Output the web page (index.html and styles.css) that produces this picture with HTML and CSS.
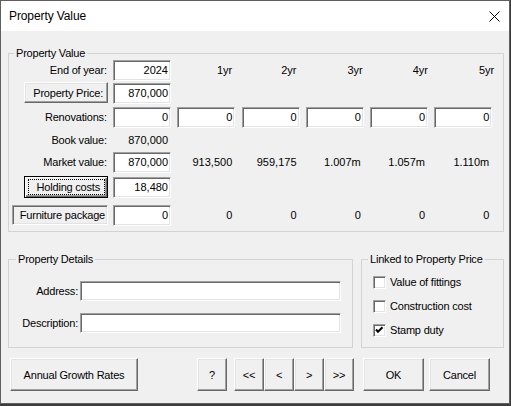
FILE: index.html
```html
<!DOCTYPE html>
<html>
<head>
<meta charset="utf-8">
<title>Property Value</title>
<link rel="stylesheet" href="styles.css">
</head>
<body>
<div class="window">
  <div class="titlebar">
    <span class="title">Property Value</span>
    <svg class="close" width="11" height="11" viewBox="0 0 11 11"><path d="M0.5 0.5 L10.5 10.5 M10.5 0.5 L0.5 10.5" stroke="#000" stroke-width="1" fill="none"/></svg>
  </div>
  <div class="content">
    <fieldset class="group g-value">
      <legend>Property Value</legend>
      <div class="row r-year">
        <span class="lbl">End of year:</span>
        <div class="tb">2024</div>
        <span class="val yr1">1yr</span>
        <span class="val yr2">2yr</span>
        <span class="val yr3">3yr</span>
        <span class="val yr4">4yr</span>
        <span class="val yr5">5yr</span>
      </div>
      <div class="row r-price">
        <button class="btn btn-price">Property Price:</button>
        <div class="tb">870,000</div>
      </div>
      <div class="row r-renov">
        <span class="lbl">Renovations:</span>
        <div class="tb">0</div>
        <div class="tb">0</div>
        <div class="tb">0</div>
        <div class="tb">0</div>
        <div class="tb">0</div>
        <div class="tb">0</div>
      </div>
      <div class="row r-book">
        <span class="lbl">Book value:</span>
        <span class="val">870,000</span>
      </div>
      <div class="row r-market">
        <span class="lbl">Market value:</span>
        <div class="tb">870,000</div>
        <span class="val">913,500</span>
        <span class="val">959,175</span>
        <span class="val">1.007m</span>
        <span class="val">1.057m</span>
        <span class="val">1.110m</span>
      </div>
      <div class="row r-hold">
        <button class="btn btn-hold"><span class="focus">Holding costs</span></button>
        <div class="tb">18,480</div>
      </div>
      <div class="row r-furn">
        <div class="flat">Furniture package</div>
        <div class="tb">0</div>
        <span class="val">0</span>
        <span class="val">0</span>
        <span class="val">0</span>
        <span class="val">0</span>
        <span class="val">0</span>
      </div>
    </fieldset>

    <div class="lower">
      <fieldset class="group g-details">
        <legend>Property Details</legend>
        <div class="form">
          <span class="lbl">Address:</span>
          <div class="tb"></div>
          <span class="lbl">Description:</span>
          <div class="tb"></div>
        </div>
      </fieldset>
      <fieldset class="group g-linked">
        <legend>Linked to Property Price</legend>
        <div class="checks">
          <div class="check"><span class="cb"></span><span class="ctext">Value of fittings</span></div>
          <div class="check"><span class="cb"></span><span class="ctext">Construction cost</span></div>
          <div class="check"><span class="cb"><svg width="11" height="11" viewBox="0 0 11 11"><path d="M2 4.5 L4 6.8 L8.5 2.2" stroke="#000" stroke-width="2" fill="none"/></svg></span><span class="ctext">Stamp duty</span></div>
        </div>
      </fieldset>
    </div>

    <div class="buttons">
      <button class="btn b-annual">Annual Growth Rates</button>
      <button class="btn b-help">?</button>
      <button class="btn b-nav b-first">&lt;&lt;</button>
      <button class="btn b-nav">&lt;</button>
      <button class="btn b-nav">&gt;</button>
      <button class="btn b-nav">&gt;&gt;</button>
      <button class="btn b-ok">OK</button>
      <button class="btn b-cancel">Cancel</button>
    </div>
  </div>
</div>
</body>
</html>
```

FILE: styles.css
```css
* { box-sizing: border-box; }
html, body { margin: 0; padding: 0; }
body {
  width: 511px;
  height: 406px;
  overflow: hidden;
  background: #3c3c3c;
  font: 11px/14px "Liberation Sans", Arial, sans-serif;
  color: #000;
}
.window {
  width: 510px;
  height: 404px;
  border: 1px solid #5f5f5f;
  background: #f0f0f0;
  display: flex;
  flex-direction: column;
}
.titlebar {
  height: 30px;
  flex: none;
  background: #fff;
  display: flex;
  align-items: center;
  padding: 0 9px 0 8px;
}
.title {
  flex: 1;
  font-size: 12px;
  letter-spacing: -0.1px;
}
.close { display: block; margin-top: 1px; }
.content {
  padding: 15px 5px 0 7px;
}
fieldset.group {
  margin: 0;
  padding: 0;
  border: 1px solid #d3d3d3;
  min-width: 0;
}
legend {
  padding: 0 2px;
  line-height: 14px;
  letter-spacing: -0.2px;
}
.g-value legend { margin-left: 5px; }
.g-details legend { margin-left: 7px; }
.g-linked legend { margin-left: 6px; }

.g-value { padding-bottom: 5px !important; }
.row {
  display: grid;
  grid-template-columns: 97.75px repeat(6, 58px);
  column-gap: 6.25px;
  align-items: start;
}
.r-year { height: 23px; }
.r-price { height: 24px; }
.r-renov { height: 23px; }
.r-book { height: 22px; }
.r-market { height: 25px; }
.r-hold { height: 28px; }
.r-furn { height: 21px; }

.lbl {
  justify-self: end;
  line-height: 21px;
  letter-spacing: -0.2px;
  white-space: nowrap;
}
.val {
  justify-self: end;
  line-height: 21px;
  padding-right: 3px;
  white-space: nowrap;
}
.yr1 { margin-right: 0; }
.yr2 { margin-right: 0; }
.yr3 { margin-right: -2px; }
.yr4 { margin-right: -3px; }
.yr5 { margin-right: -5px; }
.tb {
  height: 21px;
  background: #fff;
  border: 1px solid;
  border-color: #a0a0a0 #fff #fff #a0a0a0;
  box-shadow: inset 1px 1px #696969, inset -1px -1px #e3e3e3;
  text-align: right;
  padding-right: 2px;
  line-height: 19px;
  white-space: nowrap;
}
.btn {
  font: inherit;
  color: #000;
  background: #f0f0f0;
  border: 1px solid;
  border-color: #fff #696969 #696969 #fff;
  box-shadow: inset -1px -1px #a0a0a0, inset 1px 1px #e3e3e3;
  padding: 0;
  margin: 0;
  letter-spacing: -0.2px;
  white-space: nowrap;
}
.btn-price {
  justify-self: end;
  margin: -1px -1.25px 0 0;
  width: 84px;
  height: 21px;
  text-align: right;
  padding-right: 4px;
}
.btn-hold {
  justify-self: end;
  margin: -1px -1.25px 0 0;
  width: 84px;
  height: 22px;
  border: 1px solid #000;
  box-shadow: inset 1px 1px #fff, inset -1px -1px #696969, inset -2px -2px #a0a0a0;
  padding: 2px 2px 2px 3px;
  display: flex;
}
.focus {
  flex: 1;
  border: 1px dotted #000;
  text-align: right;
  padding-right: 4px;
  line-height: 14px;
}
.flat {
  justify-self: end;
  margin-right: -1.25px;
  width: 96px;
  height: 20px;
  border: 1px solid;
  border-color: #a0a0a0 #fff #fff #a0a0a0;
  box-shadow: inset 1px 1px #696969, inset -1px -1px #e3e3e3;
  text-align: right;
  padding-right: 2px;
  line-height: 18px;
  letter-spacing: -0.2px;
  white-space: nowrap;
}

.lower {
  display: flex;
  margin-top: 20px;
}
.g-details { width: 345px; flex: none; }
.g-linked { flex: 1; margin-left: 8px !important; }
.form {
  display: grid;
  grid-template-columns: 69px 261px;
  column-gap: 2px;
  row-gap: 12px;
  padding: 15px 0 14px 0;
}
.form .lbl { line-height: 20px; }
.form .tb { height: 20px; }

.checks { padding: 4px 0 0 11px; }
.check {
  display: flex;
  align-items: center;
  height: 24px;
  gap: 4px;
}
.cb {
  width: 13px;
  height: 13px;
  background: #fff;
  border: 1px solid;
  border-color: #a0a0a0 #fff #fff #a0a0a0;
  box-shadow: inset 1px 1px #696969, inset -1px -1px #e3e3e3;
  display: flex;
  align-items: center;
  justify-content: center;
}
.cb svg { display: block; }
.ctext { letter-spacing: -0.2px; white-space: nowrap; }

.buttons {
  display: flex;
  margin-top: 10px;
}
.buttons .btn { height: 33px; }
.b-annual { width: 128px; margin-left: 2px; }
.b-help { width: 30px; margin-left: 59px; }
.b-nav { width: 30px; }
.b-first { margin-left: 7px; }
.b-ok { width: 61px; margin-left: 9px; }
.b-cancel { width: 61px; margin-left: 5px; }
```
